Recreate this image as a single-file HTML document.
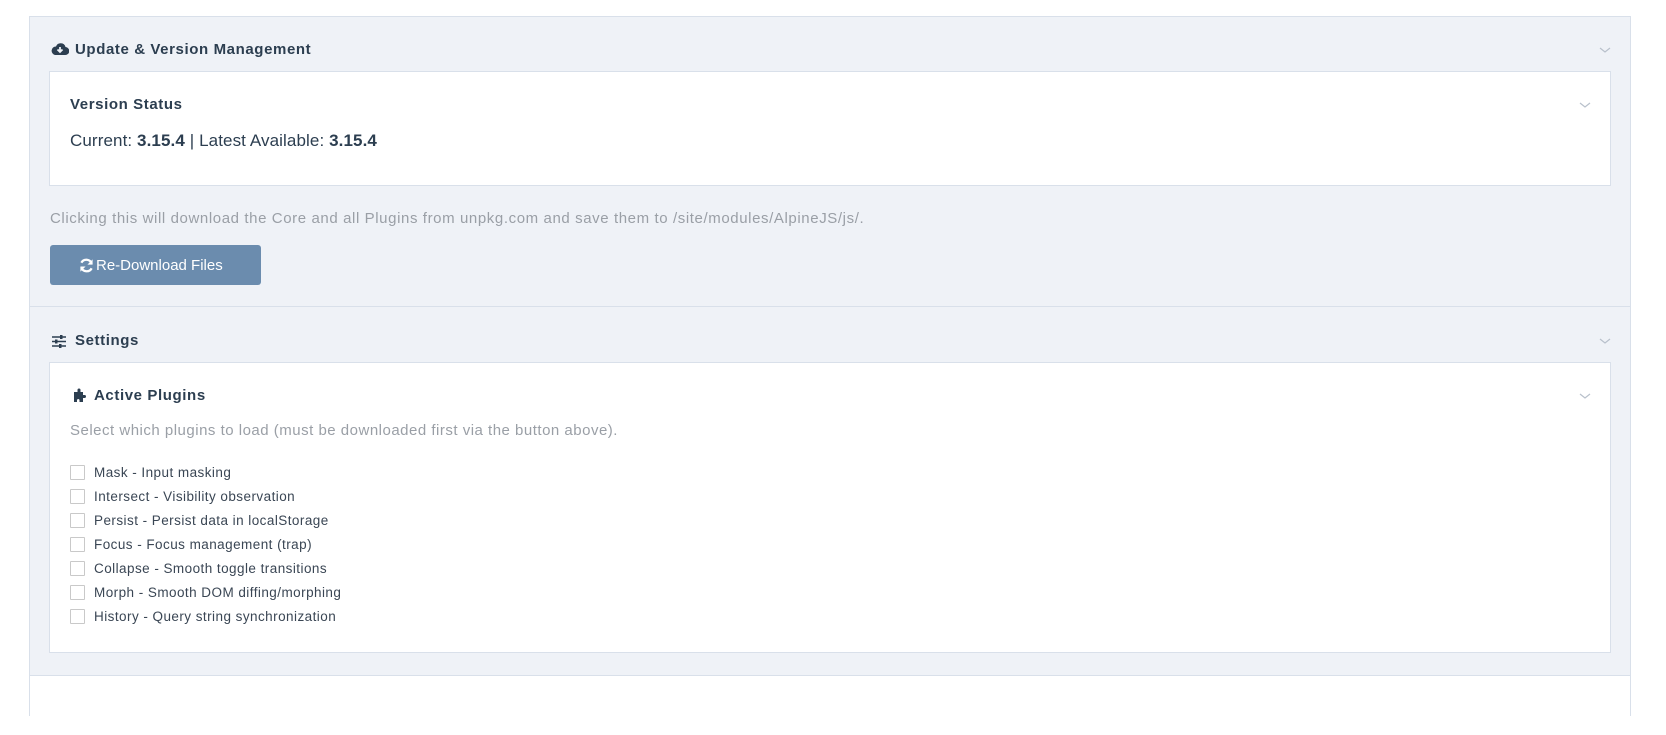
<!DOCTYPE html>
<html><head><style>
*{box-sizing:border-box;margin:0;padding:0}
body{width:1666px;height:695px;background:#fff;font-family:"Liberation Sans",sans-serif;color:#2c3e50;position:relative;overflow:hidden}
.abs{position:absolute}
.outer{left:29px;top:16px;width:1602px;height:700px;background:#eff2f7;border:1px solid #d9e0ea}
.box{background:#fff;border:1px solid #d9e0ea}
.t{font-weight:bold;font-size:15px;line-height:20px;white-space:nowrap;letter-spacing:0.6px}
.chev{width:12px;height:8px}
.cb{width:15px;height:15px;border:1px solid #c9c9c9;background:#fff;border-radius:1px}
.lbl{font-size:13.5px;color:#3a4654;white-space:nowrap;line-height:18px;letter-spacing:0.45px}
.muted{color:#9a9fa6;font-size:15px;white-space:nowrap;line-height:20px;letter-spacing:0.6px}
</style></head><body>
<div class="abs outer"></div>
<div class="abs" style="left:30px;top:306px;width:1600px;height:1px;background:#d9e0ea"></div>
<div class="abs" style="left:30px;top:675px;width:1600px;height:60px;background:#fff;border-top:1px solid #d9e0ea"></div>

<svg class="abs" style="left:51px;top:42px" width="18" height="14" viewBox="0 0 18 14"><path d="M4 13h10a4 4 0 0 0 .5-8A5 5 0 0 0 5 4.5 4.3 4.3 0 0 0 4 13z" fill="#2c3e50"/><path d="M9 5v4.5M6.5 7.5 9 10l2.5-2.5" stroke="#eff2f7" stroke-width="1.8" fill="none"/></svg>
<div class="abs t" style="left:75px;top:40px">Update &amp; Version Management</div>
<svg class="abs chev" style="left:1599px;top:46px" viewBox="0 0 12 8"><path d="M1 2l5 4 5-4" stroke="#b8c0cb" stroke-width="1.2" fill="none"/></svg>

<div class="abs box" style="left:49px;top:71px;width:1562px;height:115px"></div>
<div class="abs t" style="left:70px;top:95px">Version Status</div>
<svg class="abs chev" style="left:1579px;top:101px" viewBox="0 0 12 8"><path d="M1 2l5 4 5-4" stroke="#b8c0cb" stroke-width="1.2" fill="none"/></svg>
<div class="abs" style="left:70px;top:130px;font-size:17px;line-height:22px;white-space:nowrap;letter-spacing:0.1px">Current: <b>3.15.4</b> | Latest Available: <b>3.15.4</b></div>

<div class="abs muted" style="left:50px;top:209px">Clicking this will download the Core and all Plugins from unpkg.com and save them to /site/modules/AlpineJS/js/.</div>
<div class="abs" style="left:50px;top:245px;width:211px;height:40px;background:#6b8cae;border-radius:3px;color:#fff;font-size:15px;line-height:40px;padding-left:29px;white-space:nowrap">
<svg style="position:absolute;left:29px;top:13px" width="15" height="15" viewBox="0 0 16 16"><path d="M13.5 6A6 6 0 0 0 2.5 5M2.5 10a6 6 0 0 0 11 1" stroke="#fff" stroke-width="2.4" fill="none"/><path d="M14.5 1.5v5.5h-5.5zM1.5 14.5V9h5.5z" fill="#fff"/></svg>
<span style="margin-left:17px;position:relative;top:1px">Re-Download Files</span></div>

<svg class="abs" style="left:52px;top:335px" width="14" height="13" viewBox="0 0 14 13"><g stroke="#2c3e50" stroke-width="1.5"><path d="M0 2h14M0 6.5h14M0 11h14"/></g><g fill="#2c3e50"><rect x="8" y="0" width="2.5" height="4"/><rect x="3" y="4.5" width="2.5" height="4"/><rect x="7" y="9" width="2.5" height="4"/></g></svg>
<div class="abs t" style="left:75px;top:331px">Settings</div>
<svg class="abs chev" style="left:1599px;top:337px" viewBox="0 0 12 8"><path d="M1 2l5 4 5-4" stroke="#b8c0cb" stroke-width="1.2" fill="none"/></svg>

<div class="abs box" style="left:49px;top:362px;width:1562px;height:291px"></div>
<svg class="abs" style="left:71px;top:387px" width="16" height="15" viewBox="0 0 16 15"><path d="M3 5h3.5V3a1.5 1.5 0 1 1 3 0v2H12v3h1.5a1.5 1.5 0 1 1 0 3H12v4H8.5v-2a1.3 1.3 0 0 0-2.5 0v2H3z" fill="#2c3e50"/></svg>
<div class="abs t" style="left:94px;top:386px">Active Plugins</div>
<svg class="abs chev" style="left:1579px;top:392px" viewBox="0 0 12 8"><path d="M1 2l5 4 5-4" stroke="#b8c0cb" stroke-width="1.2" fill="none"/></svg>
<div class="abs muted" style="left:70px;top:421px;letter-spacing:0.5px">Select which plugins to load (must be downloaded first via the button above).</div>

<div class="abs cb" style="left:70px;top:465px"></div><div class="abs lbl" style="left:94px;top:464px">Mask - Input masking</div>
<div class="abs cb" style="left:70px;top:489px"></div><div class="abs lbl" style="left:94px;top:488px">Intersect - Visibility observation</div>
<div class="abs cb" style="left:70px;top:513px"></div><div class="abs lbl" style="left:94px;top:512px">Persist - Persist data in localStorage</div>
<div class="abs cb" style="left:70px;top:537px"></div><div class="abs lbl" style="left:94px;top:536px">Focus - Focus management (trap)</div>
<div class="abs cb" style="left:70px;top:561px"></div><div class="abs lbl" style="left:94px;top:560px">Collapse - Smooth toggle transitions</div>
<div class="abs cb" style="left:70px;top:585px"></div><div class="abs lbl" style="left:94px;top:584px">Morph - Smooth DOM diffing/morphing</div>
<div class="abs cb" style="left:70px;top:609px"></div><div class="abs lbl" style="left:94px;top:608px">History - Query string synchronization</div>
</body></html>
